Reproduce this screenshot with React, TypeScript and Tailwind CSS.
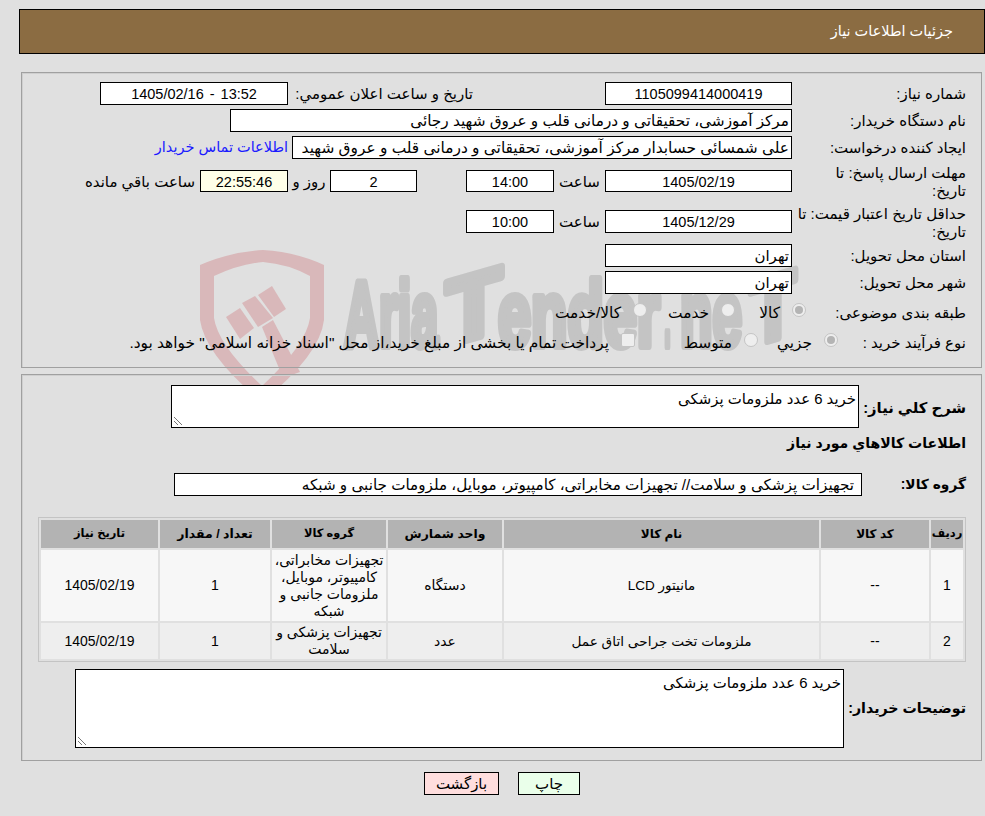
import React from "react";

const font = { fontFamily: '"Liberation Sans", "DejaVu Sans", sans-serif' };

function Box({ className = "", short, children }: { className?: string; short?: boolean; children?: React.ReactNode }) {
  return (
    <div className={`${short ? "h-[22px]" : "h-[23px]"} shrink-0 border border-black px-[2px] leading-[22px] whitespace-nowrap overflow-hidden ${className}`}>
      {children}
    </div>
  );
}

function Radio({ label, checked, className = "" }: { label: string; checked?: boolean; className?: string }) {
  return (
    <div className={`flex items-start gap-[12px] shrink-0 ${className}`}>
      <span className="w-[14px] h-[14px] mt-[5px] rounded-full border border-[#c4c4c4] bg-[#eeeeee] flex items-center justify-center shrink-0">
        {checked && <span className="w-[8px] h-[8px] rounded-full bg-[#b4b4b4]" />}
      </span>
      <span className="text-[15.4px] mt-[6px] leading-[18px] whitespace-nowrap">{label}</span>
    </div>
  );
}

function Label({ children, className = "" }: { children: React.ReactNode; className?: string }) {
  return <div className={`shrink-0 text-[15px] leading-[18px] ${className}`}>{children}</div>;
}

function Grip() {
  return (
    <svg className="absolute left-[1px] bottom-[1px]" width="10" height="10" viewBox="0 0 10 10">
      <path d="M1 1 L9 9 M1 5 L5 9" stroke="#777" strokeWidth="1" fill="none" />
    </svg>
  );
}

function Watermark() {
  const g = { fontFamily: '"Liberation Sans", sans-serif', fontWeight: 700, fontSize: 92, fill: "#c4c4c4", stroke: "#c4c4c4", strokeWidth: 8, strokeLinejoin: "round" as const, direction: "ltr" as const, lengthAdjust: "spacingAndGlyphs" };
  return (
    <svg className="absolute left-0 top-0 pointer-events-none" width="985" height="430" viewBox="0 0 985 430" aria-hidden="true">
      <g fill="#d9b8ba">
        <path fillRule="evenodd" d="M200 265 Q230 252 263 250 Q296 252 324 265 L324 320 Q320 355 262 402 Q205 355 200 320 Z M214 276 L214 318 Q218 345 262 386 Q306 345 310 318 L310 276 Q288 264 263 262 Q240 264 214 276 Z" />
        <path d="M226 317 L240 308 L254 328 L240 339 Z" />
        <path d="M242 303 L255 296 L273 318 L258 327 Z" />
        <path d="M258 295 L272 286 L286 309 L274 317 Z" />
        <path d="M262 327 L273 320 L300 372 L283 378 Z" />
      </g>
      <text x="344" y="346" textLength="94" {...g}>Aria</text>
      <text x="0" y="0" textLength="56" transform="translate(446 346) skewY(-16)" {...g}>T</text>
      <text x="498" y="346" textLength="162" {...g}>ender</text>
      <text x="664" y="346" textLength="7" {...g}>.</text>
      <text x="680" y="346" textLength="62" {...g}>ne</text>
      <text x="0" y="0" textLength="46" transform="translate(750 346) skewY(-16)" {...g}>T</text>
    </svg>
  );
}

export default function App() {
  return (
    <div dir="rtl" className="relative w-[985px] h-[816px] bg-[#e0e0e0] text-black overflow-hidden" style={font}>
      <Watermark />
      <div className="relative pt-[9px] pl-[19px]">
        <div className="h-[45px] bg-[#8b6c42] border border-black pr-[31px] pt-[1px] flex items-center text-white text-[14.5px]">جزئیات اطلاعات نیاز</div>
      </div>

      <div className="relative mt-[18px] ml-[21px] mr-[3px] h-[296px] border border-[#a0a0a0] shadow-[inset_1px_1px_0_#cfcfcf] pt-[9px] pr-[15px]">
        <div className="flex items-start h-[27px]">
          <Label className="w-[174px] pt-[3px]">شماره نیاز:</Label>
          <Box className="w-[187px] bg-white text-center text-[14.5px]">1105099414000419</Box>
          <Label className="w-[317px] pr-[132px] pt-[3px]">تاریخ و ساعت اعلان عمومي:</Label>
          <Box className="w-[188px] bg-white text-center text-[14.5px] [word-spacing:2px]"><span dir="ltr">1405/02/16 - 13:52</span></Box>
        </div>
        <div className="flex items-start h-[27px]">
          <Label className="w-[174px] pt-[3px]">نام دستگاه خریدار:</Label>
          <Box className="w-[562px] bg-white text-[15.3px]">مرکز آموزشی، تحقیقاتی و درمانی قلب و عروق شهید رجائی</Box>
        </div>
        <div className="flex items-start h-[34px]">
          <Label className="w-[174px] pt-[3px]">ایجاد کننده درخواست:</Label>
          <Box className="w-[500px] bg-white text-[15.4px]">علی شمسائی حسابدار مرکز آموزشی، تحقیقاتی و درمانی قلب و عروق شهید</Box>
          <span className="mr-[4px] pt-[1px] text-[14.5px] text-[#1a1aff] whitespace-nowrap">اطلاعات تماس خریدار</span>
        </div>
        <div className="flex items-start h-[40px]">
          <Label className="w-[174px] mt-[-6px]">مهلت ارسال پاسخ: تا<br />تاریخ:</Label>
          <Box short className="w-[187px] bg-white text-center text-[14.5px]">1405/02/19</Box>
          <Label className="w-[51px] text-center text-[15.4px] pt-[3px]">ساعت</Label>
          <Box short className="w-[88px] bg-white text-center text-[14.5px]">14:00</Box>
          <div className="w-[49px] shrink-0" />
          <Box short className="w-[87px] bg-white text-center text-[14.5px]">2</Box>
          <Label className="w-[42px] text-center pt-[3px]">روز و</Label>
          <Box short className="w-[88px] bg-[#ffffe8] text-center text-[14.5px]">22:55:46</Box>
          <Label className="mr-[5px] pt-[3px] whitespace-nowrap text-[15.4px]">ساعت باقي مانده</Label>
        </div>
        <div className="flex items-start h-[34px]">
          <Label className="w-[174px] mt-[-5px] whitespace-nowrap text-[14.7px]">حداقل تاریخ اعتبار قیمت: تا<br />تاریخ:</Label>
          <Box className="w-[187px] bg-white text-center text-[14.5px]">1405/12/29</Box>
          <Label className="w-[51px] text-center text-[15.4px] pt-[3px]">ساعت</Label>
          <Box className="w-[88px] bg-white text-center text-[14.5px]">10:00</Box>
        </div>
        <div className="flex items-start h-[27px]">
          <Label className="w-[174px] pt-[3px]">استان محل تحویل:</Label>
          <Box className="w-[187px] bg-white text-[15px]">تهران</Box>
        </div>
        <div className="flex items-start h-[27px]">
          <Label className="w-[174px] pt-[3px]">شهر محل تحویل:</Label>
          <Box className="w-[187px] bg-white text-[15px]">تهران</Box>
        </div>
        <div className="flex items-start h-[30px]">
          <Label className="w-[160px] pt-[6px]">طبقه بندی موضوعی:</Label>
          <Radio label="کالا" checked className="w-[71px]" />
          <Radio label="خدمت" className="w-[88px]" />
          <Radio label="کالا/خدمت" className="w-[100px]" />
        </div>
        <div className="flex items-start h-[30px]">
          <Label className="w-[128px] pt-[6px]">نوع فرآیند خرید :</Label>
          <Radio label="جزيي" checked className="w-[80px]" />
          <Radio label="متوسط" className="w-[123px]" />
          <div className="flex items-start gap-[12px]">
            <span className="w-[14px] h-[14px] mt-[5px] rounded-[2px] border border-[#c4c4c4] bg-[#eeeeee] shrink-0" />
            <span className="text-[15.4px] mt-[6px] leading-[18px] whitespace-nowrap">پرداخت تمام یا بخشی از مبلغ خرید،از محل "اسناد خزانه اسلامی" خواهد بود.</span>
          </div>
        </div>
      </div>

      <div className="relative mt-[6px] ml-[21px] mr-[3px] h-[387px] border border-[#a0a0a0] shadow-[inset_1px_1px_0_#cfcfcf] pr-[15px] pt-[10px]">
        <div className="flex items-start">
          <div className="w-[107px] shrink-0 pt-[12px] text-[14.8px] font-bold whitespace-nowrap">شرح کلي نیاز:</div>
          <div className="relative w-[688px] h-[43px] border border-black bg-white px-[2px] pt-[2px] text-[14.9px] whitespace-nowrap">خرید 6 عدد ملزومات پزشکی<Grip /></div>
        </div>
        <div className="mt-[1px] h-[28px] text-[14.1px] font-bold leading-[28px]">اطلاعات کالاهاي مورد نیاز</div>
        <div className="flex items-start mt-[16px]">
          <div className="w-[104px] shrink-0 pt-[2px] text-[13.8px] font-bold">گروه کالا:</div>
          <Box className="w-[688px] bg-white pr-[7px] text-[15.2px]">تجهیزات پزشکی و سلامت// تجهیزات مخابراتی، کامپیوتر، موبایل، ملزومات جانبی و شبکه</Box>
        </div>
        <table className="mt-[21px] w-[928px] border border-[#c4c4c4] border-separate border-spacing-[2px] text-[14px] text-center table-fixed">
          <colgroup>
            <col className="w-[32px]" />
            <col className="w-[108px]" />
            <col className="w-[315px]" />
            <col className="w-[114px]" />
            <col className="w-[114px]" />
            <col className="w-[110px]" />
            <col className="w-[117px]" />
          </colgroup>
          <thead>
            <tr className="bg-[#b3b3b3] h-[28px] text-[12px]">
              <th className="font-bold p-0 text-[11.5px]">ردیف</th>
              <th className="font-bold p-0">کد کالا</th>
              <th className="font-bold p-0">نام کالا</th>
              <th className="font-bold p-0 text-[12.4px]">واحد شمارش</th>
              <th className="font-bold p-0 text-[11.4px]">گروه کالا</th>
              <th className="font-bold p-0 text-[12.5px]">تعداد / مقدار</th>
              <th className="font-bold p-0 text-[11.5px]">تاریخ نیاز</th>
            </tr>
          </thead>
          <tbody className="leading-[17px]">
            <tr className="bg-[#f7f7f7] h-[71px]">
              <td className="p-0">1</td>
              <td className="p-0">--</td>
              <td className="p-0 text-[13.5px]">مانیتور LCD</td>
              <td className="p-0">دستگاه</td>
              <td className="p-0 whitespace-nowrap">تجهیزات مخابراتی،<br />کامپیوتر، موبایل،<br />ملزومات جانبی و<br />شبکه</td>
              <td className="p-0">1</td>
              <td className="p-0">1405/02/19</td>
            </tr>
            <tr className="bg-[#eeeeee] h-[36px]">
              <td className="p-0">2</td>
              <td className="p-0">--</td>
              <td className="p-0 text-[13.7px]">ملزومات تخت جراحی اتاق عمل</td>
              <td className="p-0">عدد</td>
              <td className="p-0 whitespace-nowrap">تجهیزات پزشکی و<br />سلامت</td>
              <td className="p-0">1</td>
              <td className="p-0">1405/02/19</td>
            </tr>
          </tbody>
        </table>
        <div className="flex items-center mt-[7px]">
          <div className="w-[122px] shrink-0 text-[14.2px] font-bold whitespace-nowrap">توضیحات خریدار:</div>
          <div className="relative w-[769px] h-[79px] border border-black bg-white px-[2px] pt-[2px] text-[14.9px]">خرید 6 عدد ملزومات پزشکی<Grip /></div>
        </div>
      </div>

      <div dir="ltr" className="relative mt-[11px] pl-[424px] flex gap-[19px] text-[15px]">
        <button dir="rtl" className="w-[75px] h-[23px] border border-black bg-[#ffdede]">بازگشت</button>
        <button dir="rtl" className="w-[62px] h-[23px] border border-black bg-[#eaffea]">چاپ</button>
      </div>
    </div>
  );
}
